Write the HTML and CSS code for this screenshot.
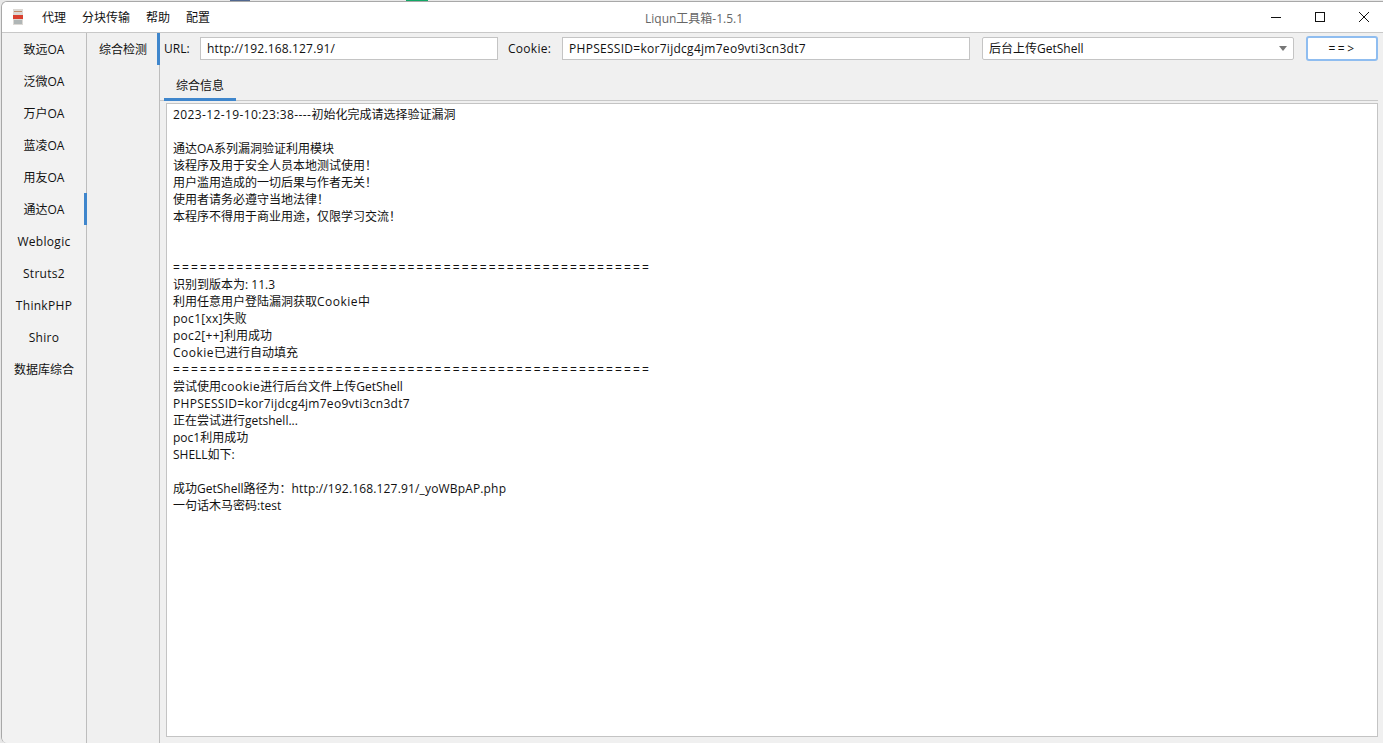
FILE: index.html
```html
<!DOCTYPE html>
<html lang="zh-CN">
<head>
<meta charset="utf-8">
<title>Liqun工具箱-1.5.1</title>
<link rel="stylesheet" href="styles.css">
</head>
<body>
<div class="window">
  <header class="titlebar">
    <svg class="app-icon" width="10" height="16" viewBox="0 0 10 16"><rect width="10" height="16" fill="#dcd9d5"/><rect x="1" y="2" width="8" height="1" fill="#c08a68"/><rect x="0" y="6" width="10" height="4" fill="#d9402f"/><rect x="1" y="11" width="8" height="4" fill="#b0b6b6"/></svg>
    <nav class="menu"><span>代理</span><span>分块传输</span><span>帮助</span><span>配置</span></nav>
    <div class="title">Liqun工具箱-1.5.1</div>
    <div class="controls">
      <button class="ctl" aria-label="最小化"><svg width="12" height="12" viewBox="0 0 12 12"><path d="M1 6.5h10" stroke="#111" fill="none"/></svg></button>
      <button class="ctl" aria-label="最大化"><svg width="12" height="12" viewBox="0 0 12 12"><rect x="1.5" y="1.5" width="9" height="9" stroke="#111" fill="none"/></svg></button>
      <button class="ctl" aria-label="关闭"><svg width="12" height="12" viewBox="0 0 12 12"><path d="M1 1l10 10M11 1L1 11" stroke="#111" fill="none"/></svg></button>
    </div>
  </header>
  <div class="main">
    <aside class="side side-a">
      <div class="item">致远OA</div>
      <div class="item">泛微OA</div>
      <div class="item">万户OA</div>
      <div class="item">蓝凌OA</div>
      <div class="item">用友OA</div>
      <div class="item active">通达OA</div>
      <div class="item item-lat">Weblogic</div>
      <div class="item item-lat">Struts2</div>
      <div class="item item-lat">ThinkPHP</div>
      <div class="item item-lat">Shiro</div>
      <div class="item">数据库综合</div>
    </aside>
    <aside class="side side-b">
      <div class="item active">综合检测</div>
    </aside>
    <section class="content">
      <div class="toolbar">
        <label class="lbl lbl-url">URL:</label>
        <div class="field url"><span class="lat-s">http://192.168.127.91/</span></div>
        <label class="lbl lbl-cookie"><span class="lat">Cookie:</span></label>
        <div class="field cookie"><span class="lat">PHPSESSID=kor7ijdcg4jm7eo9vti3cn3dt7</span></div>
        <div class="field combo"><span>后台上传GetShell</span><i class="arrow"></i></div>
        <button class="go">==&gt;</button>
      </div>
      <div class="tabs"><div class="tab">综合信息</div></div>
      <pre class="log"><span class="date">2023-12-19-10:23:38----</span>初始化完成请选择验证漏洞

通达OA系列漏洞验证利用模块
该程序及用于安全人员本地测试使用！
用户滥用造成的一切后果与作者无关！
使用者请务必遵守当地法律！
本程序不得用于商业用途，仅限学习交流！


<span class="rule">=====================================================</span>
识别到版本为: 11.3
利用任意用户登陆漏洞获取<span class="lat-w">Cookie</span>中
<span class="lat">poc1[xx]</span>失败
<span class="lat">poc2[++]</span>利用成功
<span class="lat-w">Cookie</span>已进行自动填充
<span class="rule">=====================================================</span>
尝试使用<span class="lat-w">cookie</span>进行后台文件上传GetShell
<span class="lat">PHPSESSID=kor7ijdcg4jm7eo9vti3cn3dt7</span>
正在尝试进行getshell...
poc1利用成功
SHELL如下:

成功GetShell路径为：<span class="lat-s">http://192.168.127.91/_yoWBpAP.php</span>
一句话木马密码:test</pre>
    </section>
  </div>
</div>
</body>
</html>
```

FILE: styles.css
```css
* { box-sizing: border-box; }
html, body { margin: 0; height: 100%; overflow: hidden; }
body {
  background: linear-gradient(90deg, #e8e8e8 230px, #51688f 230px, #51688f 250px, #e8e8e8 250px, #e8e8e8 406px, #12a866 406px, #12a866 428px, #e8e8e8 428px);
  font-family: "Open Sans", "Noto Sans CJK SC", sans-serif;
  font-size: 12px;
  color: #111;
}
.window {
  height: 742px;
  margin: 1px 0 0 1px;
  display: flex;
  flex-direction: column;
  background: #f0f0f0;
  border-top: 1px solid #a8a8a8;
  border-left: 1px solid #a8a8a8;
  border-radius: 6px 0 0 6px;
  overflow: hidden;
}
.titlebar {
  flex: none;
  height: 31px;
  display: flex;
  align-items: center;
  background: #fff;
  border-bottom: 1px solid #c8c8c8;
  position: relative;
}
.app-icon { margin-left: 11px; margin-top: -1px; }
.menu { display: flex; gap: 16px; margin-left: 19px; }
.title {
  position: absolute;
  left: 643px;
  top: 7px;
  color: #666;
}
.controls { margin-left: auto; margin-right: -3px; display: flex; }
.ctl {
  width: 44px;
  height: 30px;
  border: 0;
  padding: 0;
  background: none;
  display: flex;
  align-items: center;
  justify-content: center;
}
.main { flex: 1; display: flex; min-height: 0; }
.side {
  flex: none;
  border-right: 1px solid #bdbdbd;
}
.side-a { width: 85px; background: #f2f2f2; }
.side-b { width: 73px; }
.item {
  height: 32px;
  display: flex;
  align-items: center;
  justify-content: center;
  padding-bottom: 1px;
  position: relative;
}
.item-lat { padding-bottom: 0; letter-spacing: 0.3px; }
.item.active::after {
  content: "";
  position: absolute;
  top: 0;
  right: -1px;
  width: 3px;
  height: 32px;
  background: #3f86cc;
}
.content { flex: 1; min-width: 0; display: flex; flex-direction: column; padding-right: 5px; }
.toolbar { display: flex; align-items: center; height: 31px; flex: none; }
.lbl { flex: none; }
.lbl-url { margin-left: 4px; width: 36px; }
.lbl-cookie { width: 54px; margin-left: 10px; }
.field {
  height: 23px;
  background: #fff;
  border: 1px solid #c4c4c4;
  padding-left: 6px;
  display: flex;
  align-items: center;
  flex: none;
}
.url { width: 298px; }
.cookie { width: 408px; }
.combo {
  width: 312px;
  margin-left: 12px;
  border-radius: 2px;
  justify-content: space-between;
  padding-right: 6px;
  padding-bottom: 1px;
}
.arrow {
  width: 0;
  height: 0;
  border-left: 4.5px solid transparent;
  border-right: 4.5px solid transparent;
  border-top: 5px solid #777;
}
.go {
  width: 73px;
  height: 25px;
  margin-left: 12px;
  background: #fff;
  border: 2px solid #8fbdf0;
  border-radius: 3px;
  padding: 0 0 0 1px;
  font: inherit;
  letter-spacing: 2.5px;
  color: #111;
}
.tabs {
  flex: none;
  height: 37px;
  padding: 7px 0 0 4px;
  border-bottom: 1px solid #c8c8c8;
}
.tab {
  width: 72px;
  height: 30px;
  display: flex;
  align-items: center;
  justify-content: center;
  border-bottom: 3px solid #3f86cc;
}
.log {
  flex: 1;
  margin: 2px 0 6px 6px;
  padding: 2px 6px;
  background: #fff;
  border: 1px solid #c4c4c4;
  font: inherit;
  line-height: 17px;
  white-space: pre-wrap;
  overflow: hidden;
}
.rule { letter-spacing: 2.16px; }
.lat { letter-spacing: 0.28px; }
.lat-s { letter-spacing: 0.16px; }
.lat-w { letter-spacing: 0.5px; }
.date { letter-spacing: 0.39px; }
```
